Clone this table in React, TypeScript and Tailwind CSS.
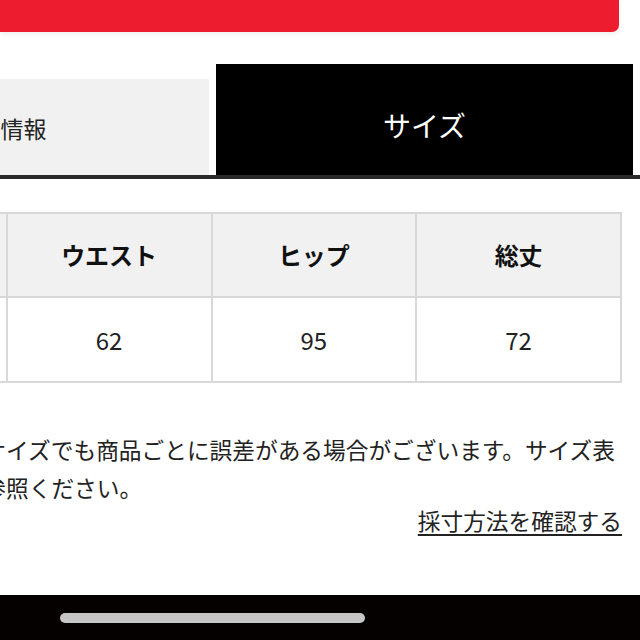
const font = { fontFamily: '"Noto Sans CJK JP", "Noto Sans", sans-serif' };

const headers = ['着丈', 'ウエスト', 'ヒップ', '総丈'];
const values = ['60', '62', '95', '72'];

export default function App() {
  return (
    <div
      className="relative flex h-[640px] w-[640px] flex-col overflow-hidden bg-white text-[#1a1a1a]"
      style={font}
    >
      {/* red banner, cut at the top */}
      <div className="h-[32px] w-[619px] shrink-0 rounded-br-[7px] bg-[#ed1c2e] shadow-[0_3px_5px_rgba(0,0,0,0.06)]" />

      {/* tabs */}
      <div className="mt-[32px] flex shrink-0 items-end gap-[7px] -ml-[208px] w-[848px]">
        <div className="flex h-[96px] w-[417px] items-center justify-center pt-[2px] bg-[#f1f1f1] text-[23px] text-[#222]">
          商品情報
        </div>
        <div className="flex h-[111px] w-[417px] items-center justify-center pt-[10px] bg-black text-[28px] text-white">
          サイズ
        </div>
      </div>
      <div className="h-[4px] w-full shrink-0 bg-[#2a2a2a]" />

      {/* size table */}
      <table className="mt-[33px] -ml-[199px] w-[821px] shrink-0 table-fixed border-collapse">
        <thead>
          <tr className="h-[84px] bg-[#f1f1f1]">
            {headers.map((h) => (
              <th
                key={h}
                className="border-2 border-[#d8d8d8] text-center text-[24px] font-bold text-[#111]"
              >
                {h}
              </th>
            ))}
          </tr>
        </thead>
        <tbody>
          <tr className="h-[85px]">
            {values.map((v, i) => (
              <td
                key={i}
                className="border-2 border-[#d8d8d8] text-center text-[24px] text-[#222]"
              >
                {v}
              </td>
            ))}
          </tr>
        </tbody>
      </table>

      {/* note */}
      <p className="mt-[48px] -ml-[62px] shrink-0 whitespace-nowrap text-[22.7px] leading-[38px] text-[#222]">
        同じサイズでも商品ごとに誤差がある場合がございます。サイズ表
        <br />
        をご参照ください。
      </p>
      <div className="mt-[-1px] flex shrink-0 justify-end pr-[18px]">
        <a
          href="#"
          className="text-[22.7px] leading-[30px] text-[#222] underline decoration-[2px] underline-offset-[4px]"
        >
          採寸方法を確認する
        </a>
      </div>

      {/* bottom bar */}
      <div className="mt-auto flex h-[45px] shrink-0 items-start bg-[#050101] pt-[18px]">
        <div className="ml-[60px] h-[10px] w-[305px] rounded-full bg-[#c6c6c6]" />
      </div>
    </div>
  );
}
